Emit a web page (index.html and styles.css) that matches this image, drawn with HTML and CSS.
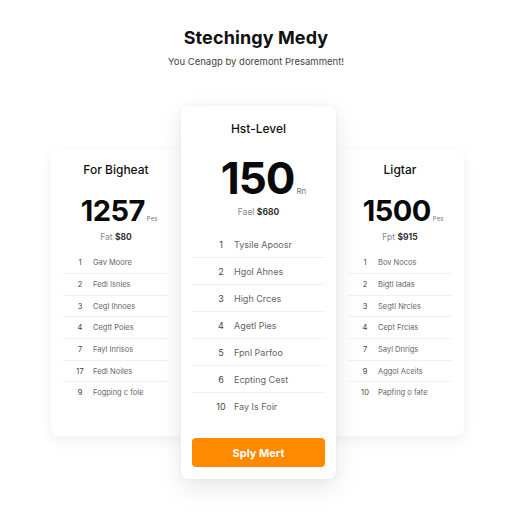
FILE: index.html
```html
<!DOCTYPE html>
<html>
<head>
<meta charset="utf-8">
<link rel="stylesheet" href="styles.css">
</head>
<body>
<header class="hero">
  <h1 class="hero-title">Stechingy Medy</h1>
  <p class="hero-sub">You Cenagp by doremont Presamment!</p>
</header>
<main class="plans">
  <section class="card card-side card-left">
    <h2 class="plan-name">For Bigheat</h2>
    <div class="price"><span class="amount">1257</span><span class="unit">Pes</span></div>
    <div class="old"><span class="old-label">Fat</span> <b>$80</b></div>
    <ul class="features">
      <li><span class="num">1</span><span>Gav Moore</span></li>
      <li><span class="num">2</span><span>Fedl Isnies</span></li>
      <li><span class="num">3</span><span>Cegl Ihnoes</span></li>
      <li><span class="num">4</span><span>Cegtt Poies</span></li>
      <li><span class="num">7</span><span>Fayl Inrisos</span></li>
      <li><span class="num">17</span><span>Fedl Noiles</span></li>
      <li><span class="num">9</span><span>Fogping c fole</span></li>
    </ul>
  </section>
  <section class="card card-main">
    <h2 class="plan-name">Hst-Level</h2>
    <div class="price"><span class="amount">150</span><span class="unit">Rn</span></div>
    <div class="old"><span class="old-label">Fael</span> <b>$680</b></div>
    <ul class="features">
      <li><span class="num">1</span><span>Tysile Apoosr</span></li>
      <li><span class="num">2</span><span>Hgol Ahnes</span></li>
      <li><span class="num">3</span><span>High Crces</span></li>
      <li><span class="num">4</span><span>Agetl Pies</span></li>
      <li><span class="num">5</span><span>Fpnl Parfoo</span></li>
      <li><span class="num">6</span><span>Ecpting Cest</span></li>
      <li><span class="num">10</span><span>Fay Is Foir</span></li>
    </ul>
    <button class="cta">Sply Mert</button>
  </section>
  <section class="card card-side card-right">
    <h2 class="plan-name">Ligtar</h2>
    <div class="price"><span class="amount">1500</span><span class="unit">Pes</span></div>
    <div class="old"><span class="old-label">Fpt</span> <b>$915</b></div>
    <ul class="features">
      <li><span class="num">1</span><span>Bov Nocos</span></li>
      <li><span class="num">2</span><span>Bigtl Iadas</span></li>
      <li><span class="num">3</span><span>Segtl Nrcles</span></li>
      <li><span class="num">4</span><span>Cept Frcias</span></li>
      <li><span class="num">7</span><span>Sayl Dnrigs</span></li>
      <li><span class="num">9</span><span>Aggol Aceits</span></li>
      <li><span class="num">10</span><span>Papfing o fate</span></li>
    </ul>
  </section>
</main>
</body>
</html>
```
FILE: styles.css
```css
* { box-sizing: border-box; margin: 0; padding: 0; }
html, body { background: #ffffff; }
body {
  width: 512px;
  height: 512px;
  overflow: hidden;
  font-family: Inter, "Liberation Sans", sans-serif;
  color: #111;
}
.hero {
  padding-top: 27px;
  text-align: center;
}
.hero-title {
  font-size: 18px;
  line-height: 22px;
  font-weight: 700;
  color: #111;
  letter-spacing: 0.1px;
}
.hero-sub {
  margin-top: 7px;
  font-size: 9.5px;
  line-height: 12px;
  color: #444;
}
.plans {
  margin-top: 38px;
  display: flex;
  align-items: center;
  padding-left: 51px;
}
.card {
  background: #fff;
  text-align: center;
}
.card-side {
  width: 130px;
  height: 286px;
  padding-top: 13px;
  box-shadow: 0 4px 14px rgba(0,0,0,0.07);
}
.card-left { border-radius: 8px 0 0 8px; }
.card-right { width: 128px; border-radius: 0 8px 8px 0; }
.card-main {
  position: relative;
  z-index: 2;
  width: 155px;
  height: 373px;
  padding: 16px 11px 12px;
  border-radius: 8px;
  box-shadow: 0 8px 24px rgba(0,0,0,0.10), 0 0 6px rgba(0,0,0,0.04);
}
.plan-name {
  font-size: 12px;
  line-height: 14px;
  font-weight: 500;
  color: #111;
}
.price {
  display: flex;
  justify-content: center;
  align-items: baseline;
}
.amount {
  font-weight: 700;
  color: #0a0a0a;
  line-height: 1;
}
.unit {
  color: #777;
  margin-left: 2px;
}
.card-side .price { margin-top: 19px; padding-left: 6px; }
.card-side .amount { font-size: 29px; height: 29px; letter-spacing: -0.5px; }
.card-side .unit { font-size: 6px; }
.card-main .price { margin-top: 20px; padding-left: 10px; }
.card-main .amount { font-size: 44px; height: 44px; letter-spacing: -1px; }
.card-main .unit { font-size: 8px; }
.old {
  margin-top: 6px;
  font-size: 8.5px;
  line-height: 12px;
  color: #333;
}
.old-label { color: #888; }
.old b { font-weight: 700; color: #333; }
.features { list-style: none; text-align: left; }
.features li {
  display: flex;
  align-items: center;
  color: #666;
}
.features li + li { border-top: 1px solid #f1f1f1; }
.num { text-align: center; color: #444; }
.card-side .features { margin: 9px 12px 0; }
.card-side .features li { height: 21.67px; padding-left: 10px; font-size: 7.5px; }
.card-side .num { width: 14px; margin-right: 6px; }
.card-main .features { margin-top: 13px; }
.card-main .features li { height: 26px; padding-left: 21px; font-size: 9px; }
.card-main .features li + li { height: 27px; }
.card-main .num { width: 16px; margin-right: 5px; }
.cta {
  display: block;
  width: 133px;
  height: 29px;
  margin-top: 19px;
  border: none;
  border-radius: 4px;
  background: #ff8a00;
  color: #fff;
  font-family: Inter, "Liberation Sans", sans-serif;
  font-size: 11px;
  font-weight: 700;
}
```
